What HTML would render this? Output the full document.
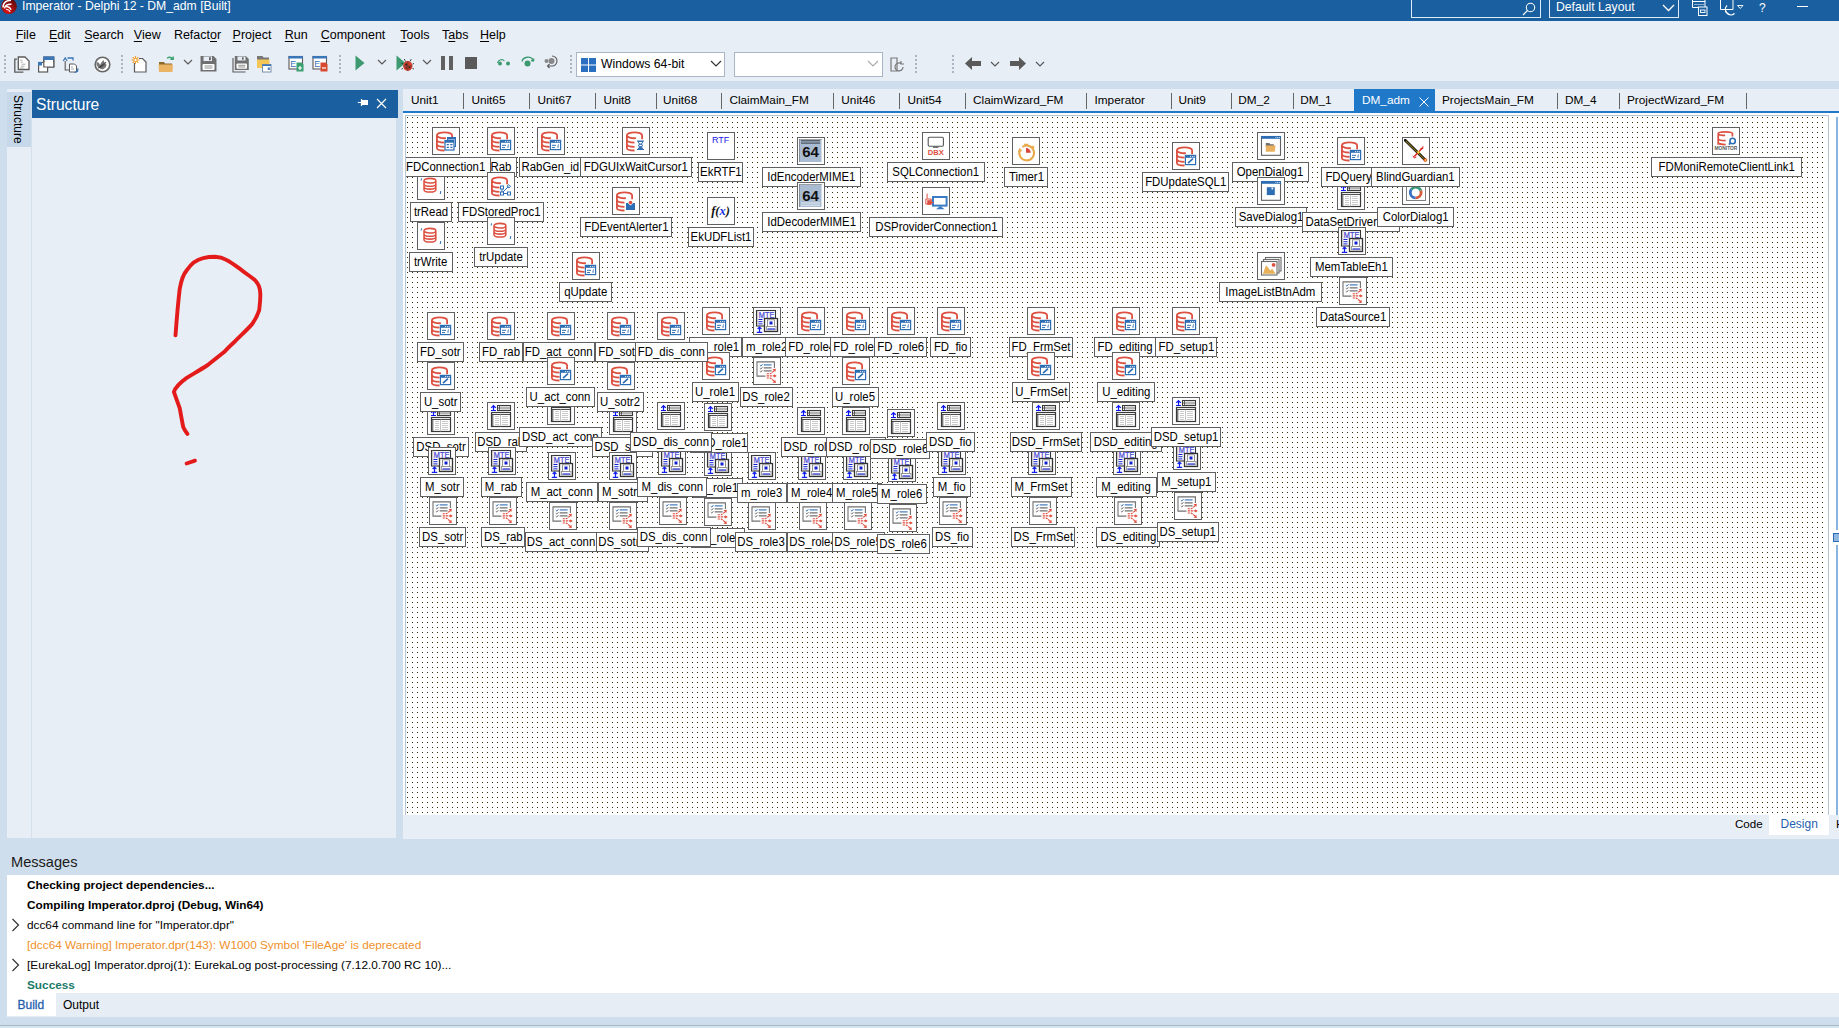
<!DOCTYPE html>
<html><head><meta charset="utf-8"><title>Delphi</title>
<style>
*{margin:0;padding:0;box-sizing:border-box}
html,body{width:1839px;height:1028px;overflow:hidden}
body{position:relative;background:#cfdeec;font-family:"Liberation Sans", sans-serif;color:#000}
.a{position:absolute}
.t{position:absolute;white-space:nowrap}
#title{left:0;top:0;width:1839px;height:21px;background:#1a5f9f;color:#fff}
#top{left:0;top:21px;width:1839px;height:60px;background:#e8eef6}
.menu{font-size:12.5px;top:7px}
.menu u{text-decoration:underline;text-underline-offset:2px;text-decoration-thickness:1px}
.tb{position:absolute}
.grip{position:absolute;width:2px;background:repeating-linear-gradient(#aab4c0 0 2px,transparent 2px 4px)}
.combo{position:absolute;background:#fff;border:1px solid #aab6c4}
#surf{left:405px;top:115px;width:1424px;height:700px;background:#fff;border:1px solid #b6c6d2;border-right-color:#b6c6d2;border-bottom:none;overflow:hidden}
.ic{position:absolute;width:28px;height:28px;border:1px solid #606060;background:#fff}
.ic svg{position:absolute;left:1px;top:1px;width:24px;height:24px}
.lb{position:absolute;height:20px;border:1px solid #606060;background:#fff;font-size:12px;line-height:17px;padding-top:1px;white-space:nowrap;overflow:hidden;display:flex;justify-content:center}
.lb span{display:block;flex:none;transform:scaleX(.95)}
.tab{position:absolute;top:93px;font-size:11.8px;white-space:nowrap}
.sep{position:absolute;top:93px;width:1px;height:16px;background:#666}
.msg{position:absolute;left:27px;font-size:11.8px;white-space:nowrap}
</style></head><body>
<svg width="0" height="0" style="position:absolute"><defs>
<symbol id="s_fdq" viewBox="-2 -2 24 24"><path d="M0.9 4.3a7.6 3 0 0 1 15.2 0v4M0.9 4.3a7.6 3 0 0 0 9 2.9M0.9 4.3v12.6c0 1.5 3 2.5 7.6 2.6M0.9 8.8c0 1.6 3 2.8 7.6 2.9M0.9 13c0 1.6 3 2.8 7.6 2.9" fill="none" stroke="#dd5142" stroke-width="1.8"/><rect x="9.4" y="9.4" width="10.2" height="9.2" fill="#fff" stroke="#2d6db4" stroke-width="1.2"/><rect x="9.4" y="9.4" width="10.2" height="2.4" fill="#2d6db4"/><circle cx="14.6" cy="10.6" r=".55" fill="#fff"/><circle cx="16.4" cy="10.6" r=".55" fill="#fff"/><circle cx="18.2" cy="10.6" r=".55" fill="#fff"/><path d="M11 14.3h4M11 16.6h3M17.5 13.5l-.6 3.2" stroke="#2d6db4" stroke-width="1"/><path d="M17.5 13.5l-.6 3.2" stroke="#9ab8e0" stroke-width="1"/></symbol>
<symbol id="s_fdu" viewBox="-2 -2 24 24"><path d="M0.9 4.3a7.6 3 0 0 1 15.2 0v4M0.9 4.3a7.6 3 0 0 0 9 2.9M0.9 4.3v12.6c0 1.5 3 2.5 7.6 2.6M0.9 8.8c0 1.6 3 2.8 7.6 2.9M0.9 13c0 1.6 3 2.8 7.6 2.9" fill="none" stroke="#dd5142" stroke-width="1.8"/><rect x="9.4" y="9.4" width="10.2" height="9.2" fill="#fff" stroke="#2d6db4" stroke-width="1.2"/><rect x="9.4" y="9.4" width="10.2" height="2.4" fill="#2d6db4"/><circle cx="14.6" cy="10.6" r=".55" fill="#fff"/><circle cx="16.4" cy="10.6" r=".55" fill="#fff"/><circle cx="18.2" cy="10.6" r=".55" fill="#fff"/><path d="M12 17.2l5-4.6" stroke="#2d6db4" stroke-width="1.6"/></symbol>
<symbol id="s_fdcon" viewBox="-2 -2 24 24"><path d="M0.9 4.3a7.6 3 0 0 1 15.2 0v4M0.9 4.3a7.6 3 0 0 0 9 2.9M0.9 4.3v12.6c0 1.5 3 2.5 7.6 2.6M0.9 8.8c0 1.6 3 2.8 7.6 2.9M0.9 13c0 1.6 3 2.8 7.6 2.9" fill="none" stroke="#dd5142" stroke-width="1.8"/><rect x="11.5" y="6.5" width="8" height="9" fill="#fff" stroke="#2d6db4" stroke-width="1"/><rect x="11.5" y="6.5" width="8" height="2" fill="#2d6db4"/><rect x="9" y="9.5" width="9" height="9.5" fill="#fff" stroke="#2d6db4" stroke-width="1.2"/><rect x="9" y="9.5" width="9" height="2.2" fill="#2d6db4"/><path d="M10.7 13.6h2.2M14.3 13.6h2.2M10.7 16.4h2.2M14.3 16.4h2.2" stroke="#2d6db4" stroke-width="1.3"/></symbol>
<symbol id="s_fdtr" viewBox="0 0 24 24"><g transform="translate(4.2,3.8) scale(.82)"><path d="M1 3.5a7.2 2.8 0 0 1 14.4 0a7.2 2.8 0 0 1-14.4 0M1 3.5v11c0 1.5 3.2 2.8 7.2 2.8s7.2-1.3 7.2-2.8v-11M1 7.5c0 1.5 3.2 2.8 7.2 2.8s7.2-1.3 7.2-2.8M1 11c0 1.5 3.2 2.8 7.2 2.8s7.2-1.3 7.2-2.8" fill="none" stroke="#dd5142" stroke-width="1.9"/></g><path d="M2.6 4.3l-.5 2.2M21.8 17l-.6 3" stroke="#2d6db4" stroke-width="1"/></symbol>
<symbol id="s_fdsp" viewBox="-2 -2 24 24"><path d="M0.9 4.3a7.6 3 0 0 1 15.2 0v4M0.9 4.3a7.6 3 0 0 0 9 2.9M0.9 4.3v12.6c0 1.5 3 2.5 7.6 2.6M0.9 8.8c0 1.6 3 2.8 7.6 2.9M0.9 13c0 1.6 3 2.8 7.6 2.9" fill="none" stroke="#dd5142" stroke-width="1.8"/><rect x="9.5" y="10" width="3" height="3" fill="#fff" stroke="#2d6db4" stroke-width="1"/><rect x="9.5" y="16" width="3" height="3" fill="#fff" stroke="#2d6db4" stroke-width="1"/><rect x="16.5" y="16" width="3" height="3" fill="#fff" stroke="#2d6db4" stroke-width="1"/><path d="M11 13v3M12.5 17.5h4M12 16l5.5-5.5M16 10.2l1.8-1.6 1.8 1.8-1.8 1.6z" fill="none" stroke="#2d6db4" stroke-width="1"/></symbol>
<symbol id="s_fdwait" viewBox="-2 -2 24 24"><path d="M0.9 4.3a7.6 3 0 0 1 15.2 0v4M0.9 4.3a7.6 3 0 0 0 9 2.9M0.9 4.3v12.6c0 1.5 3 2.5 7.6 2.6M0.9 8.8c0 1.6 3 2.8 7.6 2.9M0.9 13c0 1.6 3 2.8 7.6 2.9" fill="none" stroke="#dd5142" stroke-width="1.8"/><path d="M11 10h7M11 18.5h7" stroke="#2d6db4" stroke-width="1.2"/><path d="M12 10.5c0 3 5 3 5 4s-5 1-5 4h5c0-3-5-3-5-4s5-1 5-4z" fill="#fff" stroke="#2d6db4" stroke-width="1"/><path d="M12.5 18l2-2.5 2 2.5z" fill="#2d6db4"/></symbol>
<symbol id="s_fdevt" viewBox="-2 -2 24 24"><path d="M0.9 4.3a7.6 3 0 0 1 15.2 0v4M0.9 4.3a7.6 3 0 0 0 9 2.9M0.9 4.3v12.6c0 1.5 3 2.5 7.6 2.6M0.9 8.8c0 1.6 3 2.8 7.6 2.9M0.9 13c0 1.6 3 2.8 7.6 2.9" fill="none" stroke="#dd5142" stroke-width="1.8"/><path d="M10 12h1.8l2.7 2.5 2.7-2.5h1.8v7H10z" fill="#2d6db4"/><circle cx="14.5" cy="11.6" r="1.8" fill="#dd5142"/></symbol>
<symbol id="s_rtf" viewBox="0 0 24 24"><text x="11.7" y="9.4" font-family="Liberation Sans" font-size="9" fill="#1818e8" text-anchor="middle">RTF</text></symbol>
<symbol id="s_udf" viewBox="0 0 24 24"><text x="11.5" y="15.5" font-family="Liberation Serif" font-style="italic" font-weight="bold" font-size="12.5" fill="#111" text-anchor="middle">f(<tspan fill="#2030e0">x</tspan>)</text></symbol>
<symbol id="s_mimeenc" viewBox="0 0 24 24"><rect x="0" y="0" width="23" height="23" fill="#a9bcd2"/><path d="M0 0h23v23" fill="none" stroke="#fff" stroke-width="1"/><path d="M0 23V0h23" fill="none" stroke="#606060" stroke-width="1"/><path d="M2 1.8h19M2 4.1h19" stroke="#111" stroke-width=".75"/><text x="11.6" y="18" font-family="Liberation Sans" font-weight="bold" font-size="15" fill="#111" text-anchor="middle">64</text></symbol>
<symbol id="s_mimedec" viewBox="0 0 24 24"><rect x="0" y="0" width="23" height="23" fill="#a9bcd2"/><path d="M0 0h23v23" fill="none" stroke="#fff" stroke-width="1"/><path d="M0 23V0h23" fill="none" stroke="#606060" stroke-width="1"/><path d="M2 19h19M2 21.2h19" stroke="#f4f8ff" stroke-width=".75"/><text x="11.6" y="17" font-family="Liberation Sans" font-weight="bold" font-size="15" fill="#111" text-anchor="middle">64</text></symbol>
<symbol id="s_dbx" viewBox="0 0 24 24"><rect x="4.2" y="3.3" width="15.2" height="9" rx="1.2" fill="#fff" stroke="#555" stroke-width="1.1"/><path d="M9 13.2h5.5" stroke="#555" stroke-width="1.2"/><text x="11.8" y="21.2" font-family="Liberation Sans" font-weight="bold" font-size="7.6" fill="#dd5142" text-anchor="middle">DBX</text></symbol>
<symbol id="s_dsprov" viewBox="0 0 24 24"><rect x="9" y="8" width="13.6" height="8.6" fill="#fff" stroke="#3a7cc4" stroke-width="2"/><path d="M12 20.3l3.8-3h1l3.8 3z" fill="#3a7cc4"/><path d="M3.1 4.6v5M1.8 10h5.4v5H1.8z" fill="none" stroke="#dd5142" stroke-width="1"/><rect x="3.2" y="11.2" width="4.4" height="4.6" fill="#dd5142"/><path d="M7.5 13.5h1.8" stroke="#dd5142" stroke-width="1.2"/></symbol>
<symbol id="s_timer" viewBox="0 0 24 24"><path d="M5.8 11.2A7.4 7.4 0 1 0 8.3 8" fill="none" stroke="#e8a94a" stroke-width="2"/><path d="M3.8 13.2l1.8-4.5 2.6 3.4z" fill="#e8a94a"/><path d="M9.6 4.8h5.1l-1.5 2.2h-2.1z" fill="#e8a94a"/><path d="M18.3 7.2l1.8 1.6" stroke="#e8a94a" stroke-width="1.8"/><path d="M12 13.8V9a4.8 4.8 0 0 1 4.8 4.8z" fill="#d9463a"/></symbol>
<symbol id="s_opendlg" viewBox="0 0 24 24"><rect x="2.5" y="2.5" width="19" height="18.8" fill="#fff" stroke="#606060" stroke-width="1.1"/><rect x="2" y="2" width="20" height="2.8" fill="#2d6db4"/><circle cx="17" cy="3.4" r=".5" fill="#fff"/><circle cx="18.7" cy="3.4" r=".5" fill="#fff"/><circle cx="20.3" cy="3.4" r=".5" fill="#fff"/><path d="M6.8 9h3.5l1 1.2h3.5v3H6.8z" fill="#707070"/><path d="M6.8 11.5h9.8l-.8 6.2H6.8z" fill="#e9b060"/></symbol>
<symbol id="s_savedlg" viewBox="0 0 24 24"><rect x="2.5" y="2.5" width="19" height="18.8" fill="#fff" stroke="#606060" stroke-width="1.1"/><rect x="2" y="2" width="20" height="2.8" fill="#2d6db4"/><circle cx="17" cy="3.4" r=".5" fill="#fff"/><circle cx="18.7" cy="3.4" r=".5" fill="#fff"/><circle cx="20.3" cy="3.4" r=".5" fill="#fff"/><path d="M7.8 8.2h8v7.9h-8z" fill="#2d6db4"/><rect x="12.5" y="8.6" width="1.6" height="1.8" fill="#fff"/></symbol>
<symbol id="s_sword" viewBox="0 0 24 24"><path d="M1.2 1.2L20.5 20.3" stroke="#111" stroke-width="2.8" stroke-linecap="round"/><path d="M1.8 1.8L20 19.8" stroke="#8a7a18" stroke-width="1.1"/><path d="M10.3 17.5L18.5 8.8" stroke="#e02020" stroke-width="1.4"/><path d="M9 16.8l1.3 2.2 2-1.2M18.8 7.2v2.5l-2.3-.3" fill="none" stroke="#e02020" stroke-width="1"/><circle cx="14.4" cy="13.2" r="1.2" fill="#f0d020"/><circle cx="21.3" cy="21" r="1.5" fill="#f0c020" stroke="#e02020" stroke-width=".7"/></symbol>
<symbol id="s_dsd" viewBox="0 0 24 24"><path d="M4.5 6.2V1.6M2.2 3.8l2.3-2.3 2.3 2.3M2 6.5h5" fill="none" stroke="#0a14f0" stroke-width="1.2"/><rect x="8.5" y="1.5" width="13" height="5" fill="#fff" stroke="#3a3a3a" stroke-width="1.1"/><path d="M8.5 4h13M10.5 1.5v5" stroke="#3a3a3a" stroke-width=".8"/><path d="M11.5 2.8h9M11.5 5.3h9" stroke="#c8c8c8" stroke-width=".8"/><rect x="2.5" y="8.5" width="19" height="14" fill="#fff" stroke="#3a3a3a" stroke-width="1.2"/><path d="M2.5 10.5h19M3.8 10.5v12" stroke="#3a3a3a" stroke-width=".9"/><path d="M11.5 10.5v12" stroke="#b4b4b4" stroke-width=".8"/><path d="M6 12.5h4M6 14.5h4M6 16.5h4M6 18.5h4M6 20.5h4M13 12.5h6M13 14.5h6M13 16.5h6M13 18.5h6M13 20.5h6" stroke="#bdbdbd" stroke-width=".8"/></symbol>
<symbol id="s_colordlg" viewBox="0 0 24 24"><rect x="2.5" y="2.5" width="19" height="19" fill="#fff" stroke="#808080" stroke-width="1"/><circle cx="11.7" cy="13.5" r="5.4" fill="none" stroke="#d85a3a" stroke-width="2.8" stroke-dasharray="11.3 22.6" stroke-dashoffset="2.8"/><circle cx="11.7" cy="13.5" r="5.4" fill="none" stroke="#3a9a78" stroke-width="2.8" stroke-dasharray="11.3 22.6" stroke-dashoffset="-19.8"/><circle cx="11.7" cy="13.5" r="5.4" fill="none" stroke="#3a70c0" stroke-width="2.8" stroke-dasharray="11.3 22.6" stroke-dashoffset="-8.5"/></symbol>
<symbol id="s_mte" viewBox="0 0 24 24"><rect x="1.5" y="1.5" width="19" height="15.5" fill="#fff" stroke="#333" stroke-width="1.1"/><path d="M2.8 1.5v15.5" stroke="#aaa" stroke-width=".8"/><text x="11.6" y="8.9" font-family="Liberation Sans" font-size="8.5" fill="#4848d0" stroke="#4848d0" stroke-width=".25" text-anchor="middle" textLength="15.5" lengthAdjust="spacingAndGlyphs">MTE</text><path d="M3.5 10.5h4M3.5 12.7h4M3.5 14.9h4" stroke="#1020d0" stroke-width="1"/><path d="M4.5 23V18.2M2.6 20l1.9-1.9 1.9 1.9M1.8 23.3h5.4" fill="none" stroke="#1020f0" stroke-width="1.2"/><rect x="9.5" y="9.5" width="13" height="13" fill="#fff" stroke="#333" stroke-width="1.3"/><rect x="12.5" y="10.8" width="7" height="6.7" fill="#fff" stroke="#777" stroke-width=".8"/><rect x="14.5" y="12.5" width="3" height="3" fill="#1020d0"/><rect x="11.5" y="17.5" width="9.5" height="3.5" fill="#fff" stroke="#888" stroke-width=".8"/><path d="M12.5 20h7.5" stroke="#1020d0" stroke-width="1.1"/></symbol>
<symbol id="s_imglist" viewBox="0 0 24 24"><rect x="6.5" y="3.5" width="15.5" height="13.5" fill="#fff" stroke="#6a6a6a" stroke-width="1.1"/><rect x="4.5" y="5.5" width="15.5" height="13.5" fill="#fff" stroke="#6a6a6a" stroke-width="1.1"/><rect x="2.5" y="7.5" width="15.5" height="13.5" fill="#fff" stroke="#6a6a6a" stroke-width="1.1"/><path d="M3.9 19.8L7 11.2l4.4 5.3 1.8-1.7 3.5 5z" fill="#e9b05a"/><circle cx="14.6" cy="10.9" r="1.9" fill="#dd5040"/></symbol>
<symbol id="s_ds" viewBox="0 0 24 24"><path d="M10.4 17.1H2V2.9h17.4V9" fill="none" stroke="#707070" stroke-width="1.1"/><path d="M8.7 5.9h7.9" stroke="#2d6db4" stroke-width="1.1"/><path d="M8.7 8.9h7.9M8.7 11.9h7.9" stroke="#707070" stroke-width="1.1"/><path d="M4.8 6.2l1 .9 1.6-1.9" fill="none" stroke="#2d6db4" stroke-width="1"/><path d="M4.8 9.2l1 .9 1.6-1.9M4.8 12.2l1 .9 1.6-1.9" fill="none" stroke="#707070" stroke-width="1"/><path d="M11.7 14.8h3.6l4.6-3.6M11.7 16.9h9.2M11.7 19h3.6l4.6 3.6" fill="none" stroke="#dd4a3a" stroke-width="1.1" stroke-dasharray="2.2 .8"/><path d="M17.5 10.3l3.3-.6-.5 3.3zM19.2 15.2l2.6 1.7-2.6 1.7zM17.5 23.5l3.3.6-.5-3.3z" fill="#dd4a3a"/></symbol>
<symbol id="s_moni" viewBox="0 0 24 24"><path d="M4.2 4.6c0-1.1 3.2-1.7 7.1-1.7s7.1.6 7.1 1.7v3M4.2 4.6v11.2M4.2 4.6c0 1 3 1.8 6.9 1.8M4.2 9.5c0 1.3 3.3 2.2 7.5 2.2M4.2 13.2c0 1.3 3.3 2.4 7.5 2.4" fill="none" stroke="#dd5142" stroke-width="1.7"/><circle cx="18.6" cy="12" r="2.7" fill="#fff" stroke="#2d6db4" stroke-width="1.6"/><path d="M16.5 14l-1.6 1.6" stroke="#2d6db4" stroke-width="1.7"/><text x="11.9" y="21.4" font-family="Liberation Sans" font-weight="bold" font-size="5.6" fill="#5a5a5a" text-anchor="middle" textLength="23" lengthAdjust="spacingAndGlyphs">MONITOR</text></symbol>
<pattern id="dots" x="1" y="1" width="5" height="5" patternUnits="userSpaceOnUse"><rect x="0" y="0" width="1" height="1" fill="#382c04"/></pattern>
</defs></svg>
<div id="title" class="a">
<svg class="a" style="left:0;top:0" width="19" height="16" viewBox="0 0 19 16"><defs><radialGradient id="lg" cx=".4" cy=".8" r=".8"><stop offset="0" stop-color="#e01010"/><stop offset="1" stop-color="#5a0c10"/></radialGradient></defs><circle cx="9" cy="6.3" r="7.8" fill="url(#lg)"/><path d="M3 7.5C3 3 6 .5 11 .2M4.5 8.5C5 5.5 7.5 4 11.5 4.3M6 6.5c2 0 4 .8 5 3.2" fill="none" stroke="#fff" stroke-width="1.5"/><path d="M6 9.5c2-.2 3.5 1 4.2 2.5" fill="none" stroke="#f4e0e0" stroke-width="1.3"/></svg>
<div class="t" style="left:22px;top:-2px;font-size:12.2px;line-height:16px">Imperator - Delphi 12 - DM_adm [Built]</div>
<div class="a" style="left:1411px;top:0;width:130px;height:18px;border:1px solid #e0eaf4;border-top:none"></div>
<svg class="a" style="left:1522px;top:2px" width="14" height="14" viewBox="0 0 14 14"><circle cx="8.5" cy="5.5" r="4.2" fill="none" stroke="#fff" stroke-width="1.1"/><path d="M5.5 8.5L1 13" stroke="#fff" stroke-width="1.2"/></svg>
<div class="a" style="left:1549px;top:0;width:130px;height:18px;border:1px solid #e0eaf4;border-top:none"></div>
<div class="t" style="left:1556px;top:-1px;font-size:12.2px;line-height:16px">Default Layout</div>
<svg class="a" style="left:1662px;top:4px" width="13" height="8" viewBox="0 0 13 8"><path d="M1 1l5.5 5.5L12 1" fill="none" stroke="#fff" stroke-width="1.3"/></svg>
<svg class="a" style="left:1691px;top:0" width="19" height="17" viewBox="0 0 19 17"><path d="M1.5 0v7.5h12.5V0M1.5 1.5h12.5" fill="none" stroke="#fff"/><path d="M3.5 4.5h1M5.5 4.5h1M7.5 4.5h1M9.5 4.5h1M11.5 4.5h1" stroke="#fff"/><rect x="7.5" y="7" width="8.5" height="8.5" fill="#1a5f9f" stroke="#fff"/><rect x="9.5" y="10" width="4.5" height="2.5" fill="none" stroke="#fff" stroke-width=".9"/></svg>
<svg class="a" style="left:1719px;top:0" width="25" height="17" viewBox="0 0 25 17"><path d="M1.5 0v9.5h12.5V0" fill="none" stroke="#fff"/><path d="M8 5.5a5 5 0 0 0 7.5 8 5.5 5.5 0 0 1-7.5-8z" fill="#1a5f9f" stroke="#fff" stroke-width="1.1"/><path d="M18.5 5.5h5.5l-2.75 3z" fill="none" stroke="#fff" stroke-width=".9"/></svg>
<div class="t" style="left:1759px;top:0px;font-size:12px;line-height:16px">?</div>
<div class="a" style="left:1797px;top:6px;width:11px;height:1px;background:#fff"></div>
</div>
<div id="top" class="a"><div class="t menu" style="left:15.7px"><u>F</u>ile</div><div class="t menu" style="left:48.9px"><u>E</u>dit</div><div class="t menu" style="left:84.2px"><u>S</u>earch</div><div class="t menu" style="left:133.8px"><u>V</u>iew</div><div class="t menu" style="left:173.9px">Refact<u>o</u>r</div><div class="t menu" style="left:232.6px"><u>P</u>roject</div><div class="t menu" style="left:284.8px"><u>R</u>un</div><div class="t menu" style="left:320.7px"><u>C</u>omponent</div><div class="t menu" style="left:400.3px"><u>T</u>ools</div><div class="t menu" style="left:442.1px">T<u>a</u>bs</div><div class="t menu" style="left:480px"><u>H</u>elp</div><div class="grip" style="left:4px;top:34px;width:2px;height:18px"></div><div class="grip" style="left:121px;top:34px;width:2px;height:18px"></div><div class="grip" style="left:339px;top:34px;width:2px;height:18px"></div><div class="grip" style="left:570px;top:34px;width:2px;height:18px"></div><div class="grip" style="left:915px;top:34px;width:2px;height:18px"></div><div class="grip" style="left:952px;top:34px;width:2px;height:18px"></div>
<svg class="tb" style="left:13px;top:35px" width="18" height="17" viewBox="0 0 18 17"><path d="M4 3.2H1.8v13h8.6" fill="none" stroke="#5a5a5a" stroke-width="1.3"/><path d="M5.3 1h6.7l4 4v8.5H5.3z" fill="#fff" stroke="#5a5a5a" stroke-width="1.3"/><path d="M7.2 4.2h2.2M7.5 6.2h2.3M8.7 8.2h3.8M7.9 10.2h3.6M7.2 12h3.3" stroke="#999" stroke-width=".8"/></svg>
<svg class="tb" style="left:37px;top:35px" width="18" height="17" viewBox="0 0 18 17"><rect x="6.8" y="1" width="10" height="10" fill="#fff" stroke="#5a5a5a" stroke-width="1.2"/><rect x="6.3" y=".5" width="11" height="3.5" fill="#3b76b8"/><rect x="1.6" y="6.5" width="9" height="9.5" fill="#fff" stroke="#5a5a5a" stroke-width="1.2"/><rect x="1" y="6" width="4" height="3.5" fill="#3b76b8"/><rect x="6.8" y="6" width="10" height="5" fill="#fff"/><path d="M6.8 4v7h10V4" fill="none" stroke="#5a5a5a" stroke-width="1.2"/></svg>
<svg class="tb" style="left:62px;top:35px" width="17" height="17" viewBox="0 0 17 17"><path d="M3.2 5v9h4" fill="none" stroke="#5a5a5a" stroke-width="1.1"/><path d="M5.5 2h5.5v2.5" fill="none" stroke="#3b76b8" stroke-width="1.3"/><path d="M1.2 5l2-3 2 3" fill="none" stroke="#3b76b8" stroke-width="1.3"/><path d="M7.5 8h5l2 2v6h-7z" fill="#fff" stroke="#5a5a5a" stroke-width="1"/><path d="M9 11h2M9 13h3" stroke="#888" stroke-width=".7"/><path d="M12.5 16.5l3-1.2.5-3" fill="none" stroke="#3b76b8" stroke-width="1.3"/></svg>
<svg class="tb" style="left:94px;top:35px" width="17" height="17" viewBox="0 0 17 17"><circle cx="8.5" cy="8.5" r="7.3" fill="#fff" stroke="#666" stroke-width="1.6"/><path d="M2.5 6c1.5 0 3 1 3.5 3 1-2 2-4 3.5-5 .5 2 1 3 3 4.5 0 2-1.5 4-4 5-2-.5-4.5-2-6-4.5z" fill="#777"/><path d="M4 12c2 0 5-2 8-6" stroke="#555" stroke-width="1.2"/></svg>
<svg class="tb" style="left:131px;top:34px" width="16" height="18" viewBox="0 0 16 18"><path d="M3.5 8v9h11.5V7l-3.5-3.5H8" fill="#fff" stroke="#5a5a5a" stroke-width="1.2"/><path d="M4.5 1v8M.5 5h8M1.7 2.2l5.6 5.6M7.3 2.2L1.7 7.8" stroke="#f0a030" stroke-width="1.1"/><circle cx="4.5" cy="5" r="1.6" fill="#fff" stroke="#f0a030" stroke-width=".9"/></svg>
<svg class="tb" style="left:158px;top:34px" width="17" height="18" viewBox="0 0 17 18"><path d="M1 7h5l1 1.5h7V11H1z" fill="#8a6a28"/><path d="M.5 9.5h14.5l-.5 7.5H1z" fill="#eab464"/><path d="M9 3.2c2-1.4 4-1.2 5.5.6M15.2 1.5v2.8h-2.8" fill="none" stroke="#3aa070" stroke-width="1.4"/></svg>
<svg class="tb" style="left:183px;top:38px" width="10" height="7" viewBox="0 0 10 7"><path d="M1 1l4 4 4-4" fill="none" stroke="#5a5a5a" stroke-width="1.2"/></svg>
<svg class="tb" style="left:200px;top:34px" width="17" height="17" viewBox="0 0 17 17"><path d="M0.5 1h13l3 3v12.5H.5z" fill="#707070"/><rect x="3.5" y="1.5" width="8.5" height="4.5" fill="#e8eef6"/><rect x="9" y="2.2" width="1.8" height="3" fill="#606060"/><rect x="2.5" y="9" width="12" height="6" rx="1" fill="#fff"/><path d="M4.5 11h8M4.5 13h8" stroke="#777" stroke-width=".8"/></svg>
<svg class="tb" style="left:232px;top:34px" width="17" height="18" viewBox="0 0 17 18"><path d="M1 3v14h12.5" fill="none" stroke="#5a5a5a" stroke-width="1.1"/><path d="M2.8 1h11l3 3v11H2.8z" fill="#707070"/><rect x="5.5" y="1.5" width="8" height="4" fill="#e8eef6"/><rect x="10" y="2.3" width="1.6" height="2.4" fill="#606060"/><rect x="4.5" y="8.5" width="10.5" height="5.2" rx="1" fill="#fff"/><path d="M6.3 10.3h7M6.3 12h7" stroke="#777" stroke-width=".8"/></svg>
<svg class="tb" style="left:256px;top:34px" width="16" height="18" viewBox="0 0 16 18"><path d="M1 1h5.5l1 1.5H13V5H1z" fill="#777"/><path d="M1 4.5h12.5V13H1z" fill="#f4c656"/><rect x="6.5" y="9.5" width="8.5" height="7.5" fill="#fff" stroke="#7a8ea8" stroke-width="1"/><rect x="6.5" y="9.5" width="8.5" height="1.5" fill="#3b76b8"/><rect x="11.8" y="12.5" width="2" height="2.5" fill="#3b76b8"/></svg>
<svg class="tb" style="left:288px;top:34px" width="16" height="17" viewBox="0 0 16 17"><rect x="1" y="1.5" width="13.5" height="12.5" fill="#fff" stroke="#5a5a5a" stroke-width="1.1"/><rect x=".5" y="1" width="14.5" height="2.5" fill="#3b76b8"/><text x="2.3" y="12" font-family="Liberation Sans" font-size="9" fill="#3b76b8">E</text><path d="M8.5 7.5h5l2 2v7h-7z" fill="#3aa070"/><path d="M12 11v4M10 13h4" stroke="#fff" stroke-width="1.2"/></svg>
<svg class="tb" style="left:312px;top:34px" width="16" height="17" viewBox="0 0 16 17"><rect x="1" y="1.5" width="13.5" height="12.5" fill="#fff" stroke="#5a5a5a" stroke-width="1.1"/><rect x=".5" y="1" width="14.5" height="2.5" fill="#3b76b8"/><text x="2.3" y="12" font-family="Liberation Sans" font-size="9" fill="#3b76b8">E</text><path d="M8.5 7.5h5l2 2v7h-7z" fill="#d84a30"/><path d="M10 13h4" stroke="#fff" stroke-width="1.2"/></svg>
<svg class="tb" style="left:355px;top:34px" width="10" height="16" viewBox="0 0 10 16"><path d="M.5 .5L9.5 8 .5 15.5z" fill="#3d9a70"/></svg>
<svg class="tb" style="left:377px;top:38px" width="10" height="7" viewBox="0 0 10 7"><path d="M1 1l4 4 4-4" fill="none" stroke="#5a5a5a" stroke-width="1.2"/></svg>
<svg class="tb" style="left:396px;top:34px" width="18" height="17" viewBox="0 0 18 17"><path d="M.5 .5L9.5 8 .5 15.5z" fill="#3d9a70"/><ellipse cx="11.8" cy="11" rx="4.6" ry="5" fill="#d8402a"/><path d="M7.2 11h9.2M11.8 6v10" stroke="#333" stroke-width=".6"/><circle cx="10.2" cy="9.5" r="1" fill="#222"/><circle cx="13.5" cy="12.5" r="1" fill="#222"/><circle cx="10.2" cy="13" r=".8" fill="#222"/><path d="M9.5 6.5l-1.2-2.5M14 6.5l1.2-2.5M7 9l-1.5-.5M16.5 9l1.5-.5M7 13.5l-1.5.5M16.5 13.5l1.5.5" stroke="#222" stroke-width=".8"/></svg>
<svg class="tb" style="left:422px;top:38px" width="10" height="7" viewBox="0 0 10 7"><path d="M1 1l4 4 4-4" fill="none" stroke="#5a5a5a" stroke-width="1.2"/></svg>
<div class="a" style="left:441px;top:35px;width:4px;height:14px;background:#606060"></div>
<div class="a" style="left:449px;top:35px;width:4px;height:14px;background:#606060"></div>
<div class="a" style="left:465px;top:36px;width:12px;height:12px;background:#5a5a5a"></div>
<svg class="tb" style="left:496px;top:36px" width="15" height="10" viewBox="0 0 15 10"><path d="M1.5 6c1-3.5 5-4.5 7-2" fill="none" stroke="#3d9a70" stroke-width="1.2"/><circle cx="4" cy="6.5" r="2" fill="#3d9a70"/><circle cx="12" cy="6.5" r="2" fill="#3d9a70"/></svg>
<svg class="tb" style="left:520px;top:34px" width="15" height="13" viewBox="0 0 15 13"><path d="M2 6.5c1-5 9-6 11.5-1M13.8 3.5l-.3 2.5-2.5-.5" fill="none" stroke="#3d9a70" stroke-width="1.3"/><circle cx="7.5" cy="8.5" r="3" fill="#3d9a70"/></svg>
<svg class="tb" style="left:543px;top:34px" width="15" height="15" viewBox="0 0 15 15"><circle cx="3.5" cy="6" r="2" fill="#888"/><circle cx="8.5" cy="6" r="3" fill="#888"/><path d="M9 1a5 5 0 0 1 0 10H5M6.5 9l-2 2 2 2" fill="none" stroke="#5a5a5a" stroke-width="1.1"/></svg>
<div class="combo" style="left:576px;top:31px;width:149px;height:25px"></div>
<svg class="tb" style="left:581px;top:37px" width="15" height="14" viewBox="0 0 15 14"><rect x="0" y="0" width="7" height="6.5" fill="#2b6fc0"/><rect x="8" y="0" width="7" height="6.5" fill="#2b6fc0"/><rect x="0" y="7.5" width="7" height="6.5" fill="#2b6fc0"/><rect x="8" y="7.5" width="7" height="6.5" fill="#2b6fc0"/></svg>
<div class="t" style="left:601px;top:36px;font-size:12.2px">Windows 64-bit</div>
<svg class="tb" style="left:710px;top:39px" width="12" height="8" viewBox="0 0 12 8"><path d="M1 1l5 5 5-5" fill="none" stroke="#333" stroke-width="1.2"/></svg>
<div class="combo" style="left:734px;top:31px;width:149px;height:25px"></div>
<svg class="tb" style="left:867px;top:39px" width="12" height="8" viewBox="0 0 12 8"><path d="M1 1l5 5 5-5" fill="none" stroke="#aaa" stroke-width="1.2"/></svg>
<svg class="tb" style="left:890px;top:36px" width="15" height="16" viewBox="0 0 15 16"><path d="M1 1h6v13H1z" fill="none" stroke="#777" stroke-width="1.2"/><path d="M13 10a4 4 0 1 1-2-3.5M11 4v3h3" fill="none" stroke="#777" stroke-width="1.2"/></svg>
<svg class="tb" style="left:965px;top:35px" width="16" height="15" viewBox="0 0 16 15"><path d="M0 7.5L7 1v4h9v5H7v4z" fill="#5a5a5a"/></svg>
<svg class="tb" style="left:990px;top:40px" width="10" height="6" viewBox="0 0 10 6"><path d="M1 1l4 4 4-4" fill="none" stroke="#555" stroke-width="1.1"/></svg>
<svg class="tb" style="left:1010px;top:35px" width="16" height="15" viewBox="0 0 16 15"><path d="M16 7.5L9 1v4H0v5h9v4z" fill="#5a5a5a"/></svg>
<svg class="tb" style="left:1035px;top:40px" width="10" height="6" viewBox="0 0 10 6"><path d="M1 1l4 4 4-4" fill="none" stroke="#555" stroke-width="1.1"/></svg>
</div><div class="a" style="left:7px;top:89px;width:25px;height:749px;background:#e8eef6"></div>
<div class="a" style="left:7px;top:92px;width:24px;height:55px;background:#c6d8ea"></div>
<div class="t" style="left:11px;top:95px;font-size:12px;writing-mode:vertical-rl;line-height:14px">Structure</div>
<div class="a" style="left:31px;top:89px;width:1px;height:749px;background:#d4e0ec"></div>
<div class="a" style="left:32px;top:90px;width:364px;height:748px;background:#e8eef6"></div>
<div class="a" style="left:32px;top:90px;width:366px;height:28px;background:#1a5f9f"></div>
<div class="t" style="left:36px;top:96px;font-size:15.6px;color:#fff;line-height:18px">Structure</div>
<svg class="a" style="left:357px;top:98px" width="12" height="10" viewBox="0 0 12 10"><path d="M.8 4.5h3.5" stroke="#fff" stroke-width="1"/><rect x="3.9" y="1" width="1.2" height="7" fill="#fff"/><rect x="5" y="2" width="6" height="5" fill="#fff"/></svg>
<svg class="a" style="left:376px;top:98px" width="11" height="11" viewBox="0 0 11 11"><path d="M1 1l9 9M10 1l-9 9" stroke="#fff" stroke-width="1.2"/></svg>
<svg class="a" style="left:0;top:0" width="400" height="480" viewBox="0 0 400 480"><path d="M175.5 335.3C176.5 322 177.8 305 179.7 289 181.5 279 183.5 274 186.7 270.4 191 264 197 259.5 203.1 258.2 208 257 212 256.8 214.8 256.8 219 257 223 258 226.4 259.9 231 262 236 266 240.5 269.2 245 273 250 276 254.5 279.7 258.5 283.5 260.3 288 260.3 293.7 260.5 300 259.8 305 259.2 310.1 257 317 255 320 252.1 324.1 246 331 240 336 233.5 342.8 230 346 227 349 224.1 352.1 218 357 213 361 207.8 365 200 370 193 374 186.7 377.9 181 382 176 386 173.9 391.9 176 398 178 403 179.7 408.2 181 415 182 421 183.2 426.9 184.5 430 186 432 187.4 433.9" fill="none" stroke="#e31b1b" stroke-width="3.9" stroke-linecap="round" stroke-linejoin="round"/><path d="M186.5 463.5L195 460.6" stroke="#e31b1b" stroke-width="3.8" stroke-linecap="round"/></svg>
<div class="a" style="left:403px;top:89px;width:1436px;height:750px;background:#e8eef6"></div><div class="a" style="left:403px;top:113px;width:1436px;height:702px;background:#fff"></div><div class="a" style="left:403px;top:111px;width:1436px;height:2px;background:#1f78c8"></div><div class="tab" style="left:411px">Unit1</div><div class="tab" style="left:471.4px">Unit65</div><div class="tab" style="left:537.5px">Unit67</div><div class="tab" style="left:603.4px">Unit8</div><div class="tab" style="left:663.1px">Unit68</div><div class="tab" style="left:729.4px">ClaimMain_FM</div><div class="tab" style="left:841.3px">Unit46</div><div class="tab" style="left:907.5px">Unit54</div><div class="tab" style="left:973px">ClaimWizard_FM</div><div class="tab" style="left:1094.5px">Imperator</div><div class="tab" style="left:1178.4px">Unit9</div><div class="tab" style="left:1238.3px">DM_2</div><div class="tab" style="left:1300.2px">DM_1</div><div class="tab" style="left:1442px">ProjectsMain_FM</div><div class="tab" style="left:1565px">DM_4</div><div class="tab" style="left:1627px">ProjectWizard_FM</div><div class="sep" style="left:463px"></div><div class="sep" style="left:529px"></div><div class="sep" style="left:595px"></div><div class="sep" style="left:656px"></div><div class="sep" style="left:721px"></div><div class="sep" style="left:833px"></div><div class="sep" style="left:899px"></div><div class="sep" style="left:965px"></div><div class="sep" style="left:1086px"></div><div class="sep" style="left:1171px"></div><div class="sep" style="left:1231px"></div><div class="sep" style="left:1293px"></div><div class="sep" style="left:1557px"></div><div class="sep" style="left:1619px"></div><div class="sep" style="left:1746px"></div><div class="a" style="left:1354px;top:89px;width:81px;height:22px;background:#1f78c8"></div><div class="tab" style="left:1362px;color:#fff">DM_adm</div><svg class="a" style="left:1419px;top:97px" width="10" height="10" viewBox="0 0 10 10"><path d="M.5 .5l9 9M9.5 .5l-9 9" stroke="#fff" stroke-width="1"/></svg><div id="surf" class="a"><svg class="a" style="left:0;top:0" width="1424" height="700"><rect x="1" y="1" width="1417" height="697" fill="url(#dots)"/></svg><div class="ic" style="left:81px;top:11px"><svg viewBox="0 0 24 24"><use href="#s_fdq"/></svg></div><div class="lb" style="left:79px;top:41px;width:32px"><span>Rab</span></div><div class="ic" style="left:131px;top:11px"><svg viewBox="0 0 24 24"><use href="#s_fdq"/></svg></div><div class="lb" style="left:113px;top:41px;width:62px"><span>RabGen_id</span></div><div class="ic" style="left:216px;top:11px"><svg viewBox="0 0 24 24"><use href="#s_fdwait"/></svg></div><div class="lb" style="left:174px;top:41px;width:112px"><span>FDGUIxWaitCursor1</span></div><div class="ic" style="left:11px;top:56px"><svg viewBox="0 0 24 24"><use href="#s_fdtr"/></svg></div><div class="lb" style="left:4px;top:86px;width:42px"><span>trRead</span></div><div class="ic" style="left:26px;top:11px"><svg viewBox="0 0 24 24"><use href="#s_fdcon"/></svg></div><div class="lb" style="left:-5px;top:41px;width:90px"><span>FDConnection1</span></div><div class="ic" style="left:81px;top:56px"><svg viewBox="0 0 24 24"><use href="#s_fdsp"/></svg></div><div class="lb" style="left:52px;top:86px;width:86px"><span>FDStoredProc1</span></div><div class="ic" style="left:81px;top:101px"><svg viewBox="0 0 24 24"><use href="#s_fdtr"/></svg></div><div class="lb" style="left:68px;top:131px;width:54px"><span>trUpdate</span></div><div class="ic" style="left:11px;top:106px"><svg viewBox="0 0 24 24"><use href="#s_fdtr"/></svg></div><div class="lb" style="left:3px;top:136px;width:44px"><span>trWrite</span></div><div class="ic" style="left:206px;top:71px"><svg viewBox="0 0 24 24"><use href="#s_fdevt"/></svg></div><div class="lb" style="left:174px;top:101px;width:92px"><span>FDEventAlerter1</span></div><div class="ic" style="left:166px;top:136px"><svg viewBox="0 0 24 24"><use href="#s_fdq"/></svg></div><div class="lb" style="left:153px;top:166px;width:53px"><span>qUpdate</span></div><div class="ic" style="left:301px;top:16px"><svg viewBox="0 0 24 24"><use href="#s_rtf"/></svg></div><div class="lb" style="left:292px;top:46px;width:45px"><span>EkRTF1</span></div><div class="ic" style="left:301px;top:81px"><svg viewBox="0 0 24 24"><use href="#s_udf"/></svg></div><div class="lb" style="left:282px;top:111px;width:66px"><span>EkUDFList1</span></div><div class="ic" style="left:391px;top:21px"><svg viewBox="0 0 24 24"><use href="#s_mimeenc"/></svg></div><div class="lb" style="left:356px;top:51px;width:99px"><span>IdEncoderMIME1</span></div><div class="ic" style="left:391px;top:66px"><svg viewBox="0 0 24 24"><use href="#s_mimedec"/></svg></div><div class="lb" style="left:356px;top:96px;width:99px"><span>IdDecoderMIME1</span></div><div class="ic" style="left:516px;top:16px"><svg viewBox="0 0 24 24"><use href="#s_dbx"/></svg></div><div class="lb" style="left:481px;top:46px;width:98px"><span>SQLConnection1</span></div><div class="ic" style="left:516px;top:71px"><svg viewBox="0 0 24 24"><use href="#s_dsprov"/></svg></div><div class="lb" style="left:463px;top:101px;width:134px"><span>DSProviderConnection1</span></div><div class="ic" style="left:606px;top:21px"><svg viewBox="0 0 24 24"><use href="#s_timer"/></svg></div><div class="lb" style="left:598px;top:51px;width:44px"><span>Timer1</span></div><div class="ic" style="left:766px;top:26px"><svg viewBox="0 0 24 24"><use href="#s_fdu"/></svg></div><div class="lb" style="left:736px;top:56px;width:87px"><span>FDUpdateSQL1</span></div><div class="ic" style="left:851px;top:16px"><svg viewBox="0 0 24 24"><use href="#s_opendlg"/></svg></div><div class="lb" style="left:826px;top:46px;width:77px"><span>OpenDialog1</span></div><div class="ic" style="left:851px;top:61px"><svg viewBox="0 0 24 24"><use href="#s_savedlg"/></svg></div><div class="lb" style="left:829px;top:91px;width:72px"><span>SaveDialog1</span></div><div class="ic" style="left:931px;top:66px"><svg viewBox="0 0 24 24"><use href="#s_dsd"/></svg></div><div class="lb" style="left:896px;top:96px;width:98px"><span>DataSetDriverEh1</span></div><div class="ic" style="left:931px;top:21px"><svg viewBox="0 0 24 24"><use href="#s_fdq"/></svg></div><div class="lb" style="left:915px;top:51px;width:61px"><span>FDQuery1</span></div><div class="ic" style="left:996px;top:61px"><svg viewBox="0 0 24 24"><use href="#s_colordlg"/></svg></div><div class="lb" style="left:971px;top:91px;width:77px"><span>ColorDialog1</span></div><div class="ic" style="left:996px;top:21px"><svg viewBox="0 0 24 24"><use href="#s_sword"/></svg></div><div class="lb" style="left:965px;top:51px;width:89px"><span>BlindGuardian1</span></div><div class="ic" style="left:932px;top:111px"><svg viewBox="0 0 24 24"><use href="#s_mte"/></svg></div><div class="lb" style="left:904px;top:141px;width:83px"><span>MemTableEh1</span></div><div class="ic" style="left:851px;top:136px"><svg viewBox="0 0 24 24"><use href="#s_imglist"/></svg></div><div class="lb" style="left:813px;top:166px;width:103px"><span>ImageListBtnAdm</span></div><div class="ic" style="left:933px;top:161px"><svg viewBox="0 0 24 24"><use href="#s_ds"/></svg></div><div class="lb" style="left:910px;top:191px;width:74px"><span>DataSource1</span></div><div class="ic" style="left:1306px;top:11px"><svg viewBox="0 0 24 24"><use href="#s_moni"/></svg></div><div class="lb" style="left:1245px;top:41px;width:151px"><span>FDMoniRemoteClientLink1</span></div><div class="ic" style="left:21px;top:196px"><svg viewBox="0 0 24 24"><use href="#s_fdq"/></svg></div><div class="lb" style="left:11px;top:226px;width:47px"><span>FD_sotr</span></div><div class="ic" style="left:21px;top:291px"><svg viewBox="0 0 24 24"><use href="#s_dsd"/></svg></div><div class="lb" style="left:7px;top:321px;width:56px"><span>DSD_sotr</span></div><div class="ic" style="left:21px;top:246px"><svg viewBox="0 0 24 24"><use href="#s_fdu"/></svg></div><div class="lb" style="left:14px;top:276px;width:41px"><span>U_sotr</span></div><div class="ic" style="left:22px;top:331px"><svg viewBox="0 0 24 24"><use href="#s_mte"/></svg></div><div class="lb" style="left:14px;top:361px;width:44px"><span>M_sotr</span></div><div class="ic" style="left:23px;top:381px"><svg viewBox="0 0 24 24"><use href="#s_ds"/></svg></div><div class="lb" style="left:13px;top:411px;width:47px"><span>DS_sotr</span></div><div class="ic" style="left:81px;top:196px"><svg viewBox="0 0 24 24"><use href="#s_fdq"/></svg></div><div class="lb" style="left:73px;top:226px;width:44px"><span>FD_rab</span></div><div class="ic" style="left:81px;top:286px"><svg viewBox="0 0 24 24"><use href="#s_dsd"/></svg></div><div class="lb" style="left:69px;top:316px;width:52px"><span>DSD_rab</span></div><div class="ic" style="left:82px;top:331px"><svg viewBox="0 0 24 24"><use href="#s_mte"/></svg></div><div class="lb" style="left:75px;top:361px;width:41px"><span>M_rab</span></div><div class="ic" style="left:83px;top:381px"><svg viewBox="0 0 24 24"><use href="#s_ds"/></svg></div><div class="lb" style="left:75px;top:411px;width:44px"><span>DS_rab</span></div><div class="ic" style="left:141px;top:196px"><svg viewBox="0 0 24 24"><use href="#s_fdq"/></svg></div><div class="lb" style="left:117px;top:226px;width:72px"><span>FD_act_conn</span></div><div class="ic" style="left:141px;top:281px"><svg viewBox="0 0 24 24"><use href="#s_dsd"/></svg></div><div class="lb" style="left:113px;top:311px;width:83px"><span>DSD_act_conn</span></div><div class="ic" style="left:141px;top:241px"><svg viewBox="0 0 24 24"><use href="#s_fdu"/></svg></div><div class="lb" style="left:120px;top:271px;width:69px"><span>U_act_conn</span></div><div class="ic" style="left:142px;top:336px"><svg viewBox="0 0 24 24"><use href="#s_mte"/></svg></div><div class="lb" style="left:120px;top:366px;width:72px"><span>M_act_conn</span></div><div class="ic" style="left:143px;top:386px"><svg viewBox="0 0 24 24"><use href="#s_ds"/></svg></div><div class="lb" style="left:119px;top:416px;width:72px"><span>DS_act_conn</span></div><div class="ic" style="left:201px;top:196px"><svg viewBox="0 0 24 24"><use href="#s_fdq"/></svg></div><div class="lb" style="left:189px;top:226px;width:53px"><span>FD_sotr2</span></div><div class="ic" style="left:203px;top:291px"><svg viewBox="0 0 24 24"><use href="#s_dsd"/></svg></div><div class="lb" style="left:186px;top:321px;width:61px"><span>DSD_sotr2</span></div><div class="ic" style="left:201px;top:246px"><svg viewBox="0 0 24 24"><use href="#s_fdu"/></svg></div><div class="lb" style="left:191px;top:276px;width:47px"><span>U_sotr2</span></div><div class="ic" style="left:203px;top:336px"><svg viewBox="0 0 24 24"><use href="#s_mte"/></svg></div><div class="lb" style="left:192px;top:366px;width:50px"><span>M_sotr2</span></div><div class="ic" style="left:203px;top:386px"><svg viewBox="0 0 24 24"><use href="#s_ds"/></svg></div><div class="lb" style="left:190px;top:416px;width:53px"><span>DS_sotr2</span></div><div class="ic" style="left:296px;top:191px"><svg viewBox="0 0 24 24"><use href="#s_fdq"/></svg></div><div class="lb" style="left:283px;top:221px;width:53px"><span>FD_role1</span></div><div class="ic" style="left:347px;top:191px"><svg viewBox="0 0 24 24"><use href="#s_mte"/></svg></div><div class="lb" style="left:336px;top:221px;width:50px"><span>m_role2</span></div><div class="ic" style="left:391px;top:191px"><svg viewBox="0 0 24 24"><use href="#s_fdq"/></svg></div><div class="lb" style="left:379px;top:221px;width:53px"><span>FD_role4</span></div><div class="ic" style="left:436px;top:191px"><svg viewBox="0 0 24 24"><use href="#s_fdq"/></svg></div><div class="lb" style="left:424px;top:221px;width:53px"><span>FD_role5</span></div><div class="ic" style="left:481px;top:191px"><svg viewBox="0 0 24 24"><use href="#s_fdq"/></svg></div><div class="lb" style="left:468px;top:221px;width:53px"><span>FD_role6</span></div><div class="ic" style="left:296px;top:236px"><svg viewBox="0 0 24 24"><use href="#s_fdu"/></svg></div><div class="lb" style="left:286px;top:266px;width:47px"><span>U_role1</span></div><div class="ic" style="left:347px;top:241px"><svg viewBox="0 0 24 24"><use href="#s_ds"/></svg></div><div class="lb" style="left:334px;top:271px;width:53px"><span>DS_role2</span></div><div class="ic" style="left:436px;top:241px"><svg viewBox="0 0 24 24"><use href="#s_fdu"/></svg></div><div class="lb" style="left:426px;top:271px;width:47px"><span>U_role5</span></div><div class="ic" style="left:298px;top:332px"><svg viewBox="0 0 24 24"><use href="#s_mte"/></svg></div><div class="lb" style="left:287px;top:362px;width:50px"><span>M_role1</span></div><div class="ic" style="left:342px;top:336px"><svg viewBox="0 0 24 24"><use href="#s_mte"/></svg></div><div class="lb" style="left:331px;top:367px;width:50px"><span>m_role3</span></div><div class="ic" style="left:392px;top:336px"><svg viewBox="0 0 24 24"><use href="#s_mte"/></svg></div><div class="lb" style="left:381px;top:367px;width:50px"><span>M_role4</span></div><div class="ic" style="left:437px;top:336px"><svg viewBox="0 0 24 24"><use href="#s_mte"/></svg></div><div class="lb" style="left:426px;top:367px;width:50px"><span>M_role5</span></div><div class="ic" style="left:482px;top:338px"><svg viewBox="0 0 24 24"><use href="#s_mte"/></svg></div><div class="lb" style="left:471px;top:368px;width:50px"><span>M_role6</span></div><div class="ic" style="left:298px;top:382px"><svg viewBox="0 0 24 24"><use href="#s_ds"/></svg></div><div class="lb" style="left:285px;top:412px;width:54px"><span>DS_role1</span></div><div class="ic" style="left:342px;top:386px"><svg viewBox="0 0 24 24"><use href="#s_ds"/></svg></div><div class="lb" style="left:329px;top:416px;width:52px"><span>DS_role3</span></div><div class="ic" style="left:393px;top:386px"><svg viewBox="0 0 24 24"><use href="#s_ds"/></svg></div><div class="lb" style="left:381px;top:416px;width:53px"><span>DS_role4</span></div><div class="ic" style="left:438px;top:386px"><svg viewBox="0 0 24 24"><use href="#s_ds"/></svg></div><div class="lb" style="left:426px;top:416px;width:53px"><span>DS_role5</span></div><div class="ic" style="left:483px;top:388px"><svg viewBox="0 0 24 24"><use href="#s_ds"/></svg></div><div class="lb" style="left:471px;top:418px;width:53px"><span>DS_role6</span></div><div class="ic" style="left:298px;top:287px"><svg viewBox="0 0 24 24"><use href="#s_dsd"/></svg></div><div class="lb" style="left:284px;top:317px;width:58px"><span>DSD_role1</span></div><div class="ic" style="left:391px;top:291px"><svg viewBox="0 0 24 24"><use href="#s_dsd"/></svg></div><div class="lb" style="left:375px;top:321px;width:60px"><span>DSD_role4</span></div><div class="ic" style="left:436px;top:291px"><svg viewBox="0 0 24 24"><use href="#s_dsd"/></svg></div><div class="lb" style="left:420px;top:321px;width:60px"><span>DSD_role5</span></div><div class="ic" style="left:481px;top:293px"><svg viewBox="0 0 24 24"><use href="#s_dsd"/></svg></div><div class="lb" style="left:464px;top:323px;width:60px"><span>DSD_role6</span></div><div class="ic" style="left:251px;top:196px"><svg viewBox="0 0 24 24"><use href="#s_fdq"/></svg></div><div class="lb" style="left:229px;top:226px;width:73px"><span>FD_dis_conn</span></div><div class="ic" style="left:252px;top:331px"><svg viewBox="0 0 24 24"><use href="#s_mte"/></svg></div><div class="lb" style="left:231px;top:361px;width:70px"><span>M_dis_conn</span></div><div class="ic" style="left:253px;top:381px"><svg viewBox="0 0 24 24"><use href="#s_ds"/></svg></div><div class="lb" style="left:231px;top:411px;width:74px"><span>DS_dis_conn</span></div><div class="ic" style="left:251px;top:286px"><svg viewBox="0 0 24 24"><use href="#s_dsd"/></svg></div><div class="lb" style="left:224px;top:316px;width:82px"><span>DSD_dis_conn</span></div><div class="ic" style="left:531px;top:191px"><svg viewBox="0 0 24 24"><use href="#s_fdq"/></svg></div><div class="lb" style="left:524px;top:221px;width:41px"><span>FD_fio</span></div><div class="ic" style="left:532px;top:331px"><svg viewBox="0 0 24 24"><use href="#s_mte"/></svg></div><div class="lb" style="left:527px;top:361px;width:38px"><span>M_fio</span></div><div class="ic" style="left:533px;top:381px"><svg viewBox="0 0 24 24"><use href="#s_ds"/></svg></div><div class="lb" style="left:526px;top:411px;width:41px"><span>DS_fio</span></div><div class="ic" style="left:531px;top:286px"><svg viewBox="0 0 24 24"><use href="#s_dsd"/></svg></div><div class="lb" style="left:520px;top:316px;width:49px"><span>DSD_fio</span></div><div class="ic" style="left:621px;top:191px"><svg viewBox="0 0 24 24"><use href="#s_fdq"/></svg></div><div class="lb" style="left:603px;top:221px;width:64px"><span>FD_FrmSet</span></div><div class="ic" style="left:621px;top:236px"><svg viewBox="0 0 24 24"><use href="#s_fdu"/></svg></div><div class="lb" style="left:606px;top:266px;width:58px"><span>U_FrmSet</span></div><div class="ic" style="left:622px;top:331px"><svg viewBox="0 0 24 24"><use href="#s_mte"/></svg></div><div class="lb" style="left:605px;top:361px;width:61px"><span>M_FrmSet</span></div><div class="ic" style="left:623px;top:381px"><svg viewBox="0 0 24 24"><use href="#s_ds"/></svg></div><div class="lb" style="left:605px;top:411px;width:64px"><span>DS_FrmSet</span></div><div class="ic" style="left:626px;top:286px"><svg viewBox="0 0 24 24"><use href="#s_dsd"/></svg></div><div class="lb" style="left:604px;top:316px;width:72px"><span>DSD_FrmSet</span></div><div class="ic" style="left:706px;top:191px"><svg viewBox="0 0 24 24"><use href="#s_fdq"/></svg></div><div class="lb" style="left:688px;top:221px;width:62px"><span>FD_editing</span></div><div class="ic" style="left:706px;top:236px"><svg viewBox="0 0 24 24"><use href="#s_fdu"/></svg></div><div class="lb" style="left:691px;top:266px;width:58px"><span>U_editing</span></div><div class="ic" style="left:707px;top:331px"><svg viewBox="0 0 24 24"><use href="#s_mte"/></svg></div><div class="lb" style="left:690px;top:361px;width:61px"><span>M_editing</span></div><div class="ic" style="left:708px;top:381px"><svg viewBox="0 0 24 24"><use href="#s_ds"/></svg></div><div class="lb" style="left:690px;top:411px;width:64px"><span>DS_editing</span></div><div class="ic" style="left:706px;top:286px"><svg viewBox="0 0 24 24"><use href="#s_dsd"/></svg></div><div class="lb" style="left:684px;top:316px;width:72px"><span>DSD_editing</span></div><div class="ic" style="left:766px;top:191px"><svg viewBox="0 0 24 24"><use href="#s_fdq"/></svg></div><div class="lb" style="left:749px;top:221px;width:62px"><span>FD_setup1</span></div><div class="ic" style="left:767px;top:326px"><svg viewBox="0 0 24 24"><use href="#s_mte"/></svg></div><div class="lb" style="left:751px;top:356px;width:59px"><span>M_setup1</span></div><div class="ic" style="left:768px;top:376px"><svg viewBox="0 0 24 24"><use href="#s_ds"/></svg></div><div class="lb" style="left:751px;top:406px;width:62px"><span>DS_setup1</span></div><div class="ic" style="left:766px;top:281px"><svg viewBox="0 0 24 24"><use href="#s_dsd"/></svg></div><div class="lb" style="left:745px;top:311px;width:70px"><span>DSD_setup1</span></div></div><div class="a" style="left:1836px;top:117px;width:2px;height:413px;background:#8ab4e0"></div><div class="a" style="left:1833px;top:533px;width:8px;height:9px;background:#90b8e0;border:1px solid #2a68b8"></div><div class="a" style="left:1836px;top:545px;width:2px;height:270px;background:#8ab4e0"></div><div class="a" style="left:1769px;top:815px;width:60px;height:20px;background:#fff"></div><div class="t" style="left:1735px;top:817px;font-size:11.6px">Code</div><div class="t" style="left:1780.5px;top:817px;font-size:12px;color:#1f5fae">Design</div><div class="t" style="left:1836px;top:817px;font-size:11.6px">H</div><div class="t" style="left:11px;top:854px;font-size:14.6px;color:#1a1a1a">Messages</div><div class="a" style="left:7px;top:875px;width:1832px;height:118px;background:#fff"></div><div class="msg" style="top:878px;font-weight:bold">Checking project dependencies...</div><div class="msg" style="top:898px;font-weight:bold">Compiling Imperator.dproj (Debug, Win64)</div><div class="msg" style="top:918px;">dcc64 command line for "Imperator.dpr"</div><div class="msg" style="top:938px;color:#f0902a">[dcc64 Warning] Imperator.dpr(143): W1000 Symbol 'FileAge' is deprecated</div><div class="msg" style="top:958px;">[EurekaLog] Imperator.dproj(1): EurekaLog post-processing (7.12.0.700 RC 10)...</div><div class="msg" style="top:978px;font-weight:bold;color:#1a7a6a">Success</div><svg class="a" style="left:11px;top:918px" width="9" height="14" viewBox="0 0 9 14"><path d="M1.5 1l6 6-6 6" fill="none" stroke="#333" stroke-width="1.2"/></svg><svg class="a" style="left:11px;top:958px" width="9" height="14" viewBox="0 0 9 14"><path d="M1.5 1l6 6-6 6" fill="none" stroke="#333" stroke-width="1.2"/></svg><div class="a" style="left:7px;top:993px;width:1832px;height:24px;background:#e6edf5"></div><div class="a" style="left:7px;top:993px;width:49px;height:23px;background:#fff"></div><div class="t" style="left:17.5px;top:998px;font-size:12px;color:#1f5fae;-webkit-text-stroke:.3px #1f5fae">Build</div><div class="t" style="left:63px;top:998px;font-size:12px">Output</div><div class="a" style="left:0;top:1025px;width:1839px;height:1px;background:#a9b9c2"></div><div class="a" style="left:0;top:1026px;width:1839px;height:2px;background:#d2e8ee"></div></body></html>
